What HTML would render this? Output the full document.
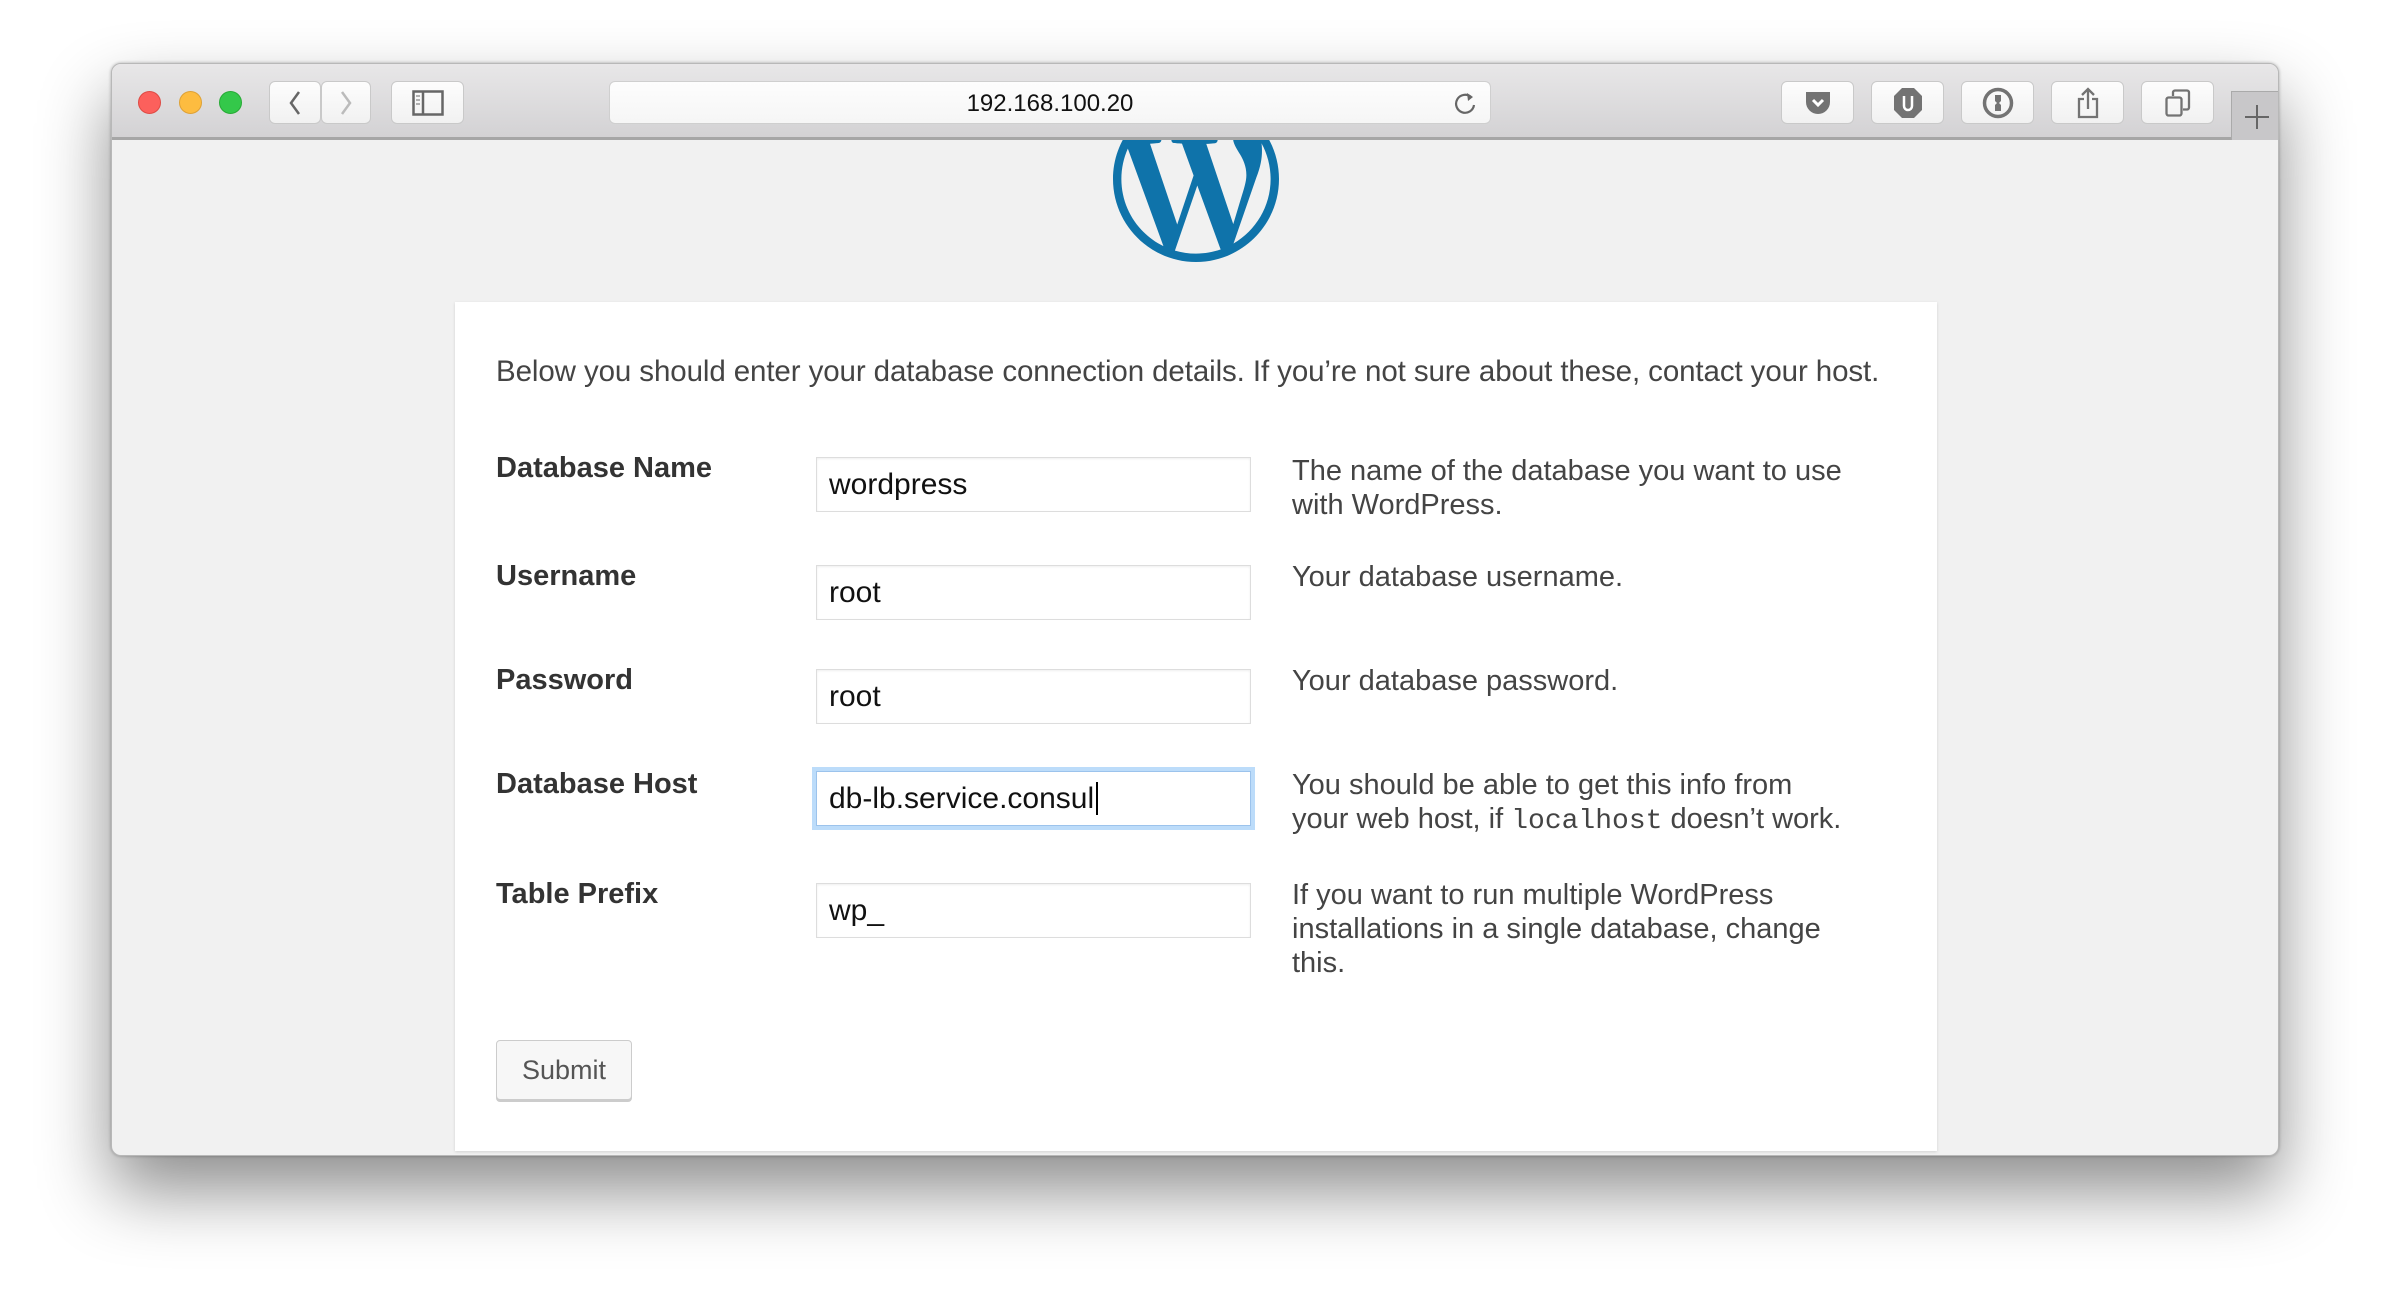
<!DOCTYPE html>
<html><head><meta charset="utf-8"><style>
*{box-sizing:border-box;margin:0;padding:0}
body{width:2390px;height:1316px;background:#fff;position:relative;overflow:hidden;font-family:"Liberation Sans",sans-serif}
.win{position:absolute;left:111px;top:63px;width:2168px;height:1093px;border-radius:10px;background:#f1f1f1;box-shadow:0 35px 70px rgba(0,0,0,.45),0 0 3px rgba(0,0,0,.3);overflow:hidden;border:1px solid #b8b8b8}
.tb{position:absolute;left:0;top:0;width:100%;height:76px;background:linear-gradient(#e8e7e8,#d3d2d4);border-bottom:3px solid #a6a6a6;z-index:5}
.dot{position:absolute;top:27px;width:23px;height:23px;border-radius:50%}
.btn{position:absolute;top:17px;height:43px;background:linear-gradient(#fdfdfd,#f1f1f1);border:1px solid #c9c9c9;border-radius:6px}
.url{position:absolute;left:497px;top:17px;width:882px;height:43px;background:linear-gradient(#fdfdfd,#f6f6f6);border:1px solid #cfcfcf;border-radius:6px;text-align:center;font-size:24px;line-height:43px;color:#111}
.btn svg{position:absolute;left:50%;top:50%;transform:translate(-50%,-50%)}
.card{position:absolute;left:343px;top:238px;width:1482px;height:849px;background:#fff;box-shadow:0 1px 3px rgba(0,0,0,.13)}
.p{position:absolute;left:41px;top:53px;font-size:29.5px;color:#444;white-space:nowrap;letter-spacing:-.1px}
.lb{position:absolute;left:41px;font-size:29px;font-weight:bold;color:#333}
.in{position:absolute;left:361px;width:435px;height:55px;border:1px solid #ddd;box-shadow:inset 0 1px 2px rgba(0,0,0,.07);font-size:30px;line-height:53px;padding-left:12px;color:#111;background:#fff}
.ds{position:absolute;left:837px;font-size:29px;line-height:34px;color:#444;white-space:nowrap}
code{font-family:"Liberation Mono",monospace;font-size:28px}
</style></head><body>
<div class="win">
<div class="tb">
<div class="dot" style="left:26px;background:#fc605c;border:1px solid #de4a44"></div>
<div class="dot" style="left:67px;background:#fdbc40;border:1px solid #dea135"></div>
<div class="dot" style="left:107px;background:#34c84a;border:1px solid #27aa35"></div>
<div class="btn" style="left:157px;width:52px"><svg width="16" height="28" viewBox="0 0 16 28"><path d="M12 3L4 14l8 11" fill="none" stroke="#666" stroke-width="2.5"/></svg></div>
<div class="btn" style="left:209px;width:50px"><svg width="16" height="28" viewBox="0 0 16 28"><path d="M4 3l8 11-8 11" fill="none" stroke="#bbb" stroke-width="2.5"/></svg></div>
<div class="btn" style="left:279px;width:73px"><svg width="32" height="26" viewBox="0 0 32 26"><rect x="1.5" y="1.5" width="29" height="23" fill="none" stroke="#666" stroke-width="2.5"/><path d="M11 2v22" stroke="#666" stroke-width="2.5"/><path d="M4 6h4M4 10h4M4 14h4" stroke="#999" stroke-width="1.5"/></svg></div>
<div class="url">192.168.100.20<svg style="position:absolute;right:12px;top:9px" width="24" height="26" viewBox="0 0 24 26"><path d="M17 6A9 9 0 1 0 20 14" fill="none" stroke="#666" stroke-width="2.2"/><path d="M13 2l6 4-5 4z" fill="#666"/></svg></div>
<div class="btn" style="left:1669px;width:73px"><svg width="26" height="26" viewBox="0 0 26 26"><path d="M1 2h24v10a12 12 0 0 1-24 0z" fill="#737373"/><path d="M8 10l5 5 5-5" fill="none" stroke="#fff" stroke-width="3"/></svg></div>
<div class="btn" style="left:1759px;width:73px"><svg width="28" height="30" viewBox="0 0 28 30"><path d="M8 0h12l8 8v14l-8 8H8l-8-8V8z" fill="#737373"/><path d="M10 8v10a4 4 0 0 0 8 0V8" fill="none" stroke="#fff" stroke-width="2.5"/></svg></div>
<div class="btn" style="left:1849px;width:73px"><svg width="32" height="32" viewBox="0 0 32 32"><circle cx="16" cy="16" r="13.5" fill="none" stroke="#737373" stroke-width="3.5"/><path d="M13 8h6v6l-2 2 2 2v6h-6v-6l2-2-2-2z" fill="#737373"/></svg></div>
<div class="btn" style="left:1939px;width:73px"><svg width="24" height="32" viewBox="0 0 24 32"><path d="M8 12H3v18h18V12h-5M12 22V2M6 8l6-6 6 6" fill="none" stroke="#737373" stroke-width="2.3"/></svg></div>
<div class="btn" style="left:2029px;width:73px"><svg width="26" height="28" viewBox="0 0 26 28"><rect x="1.5" y="8.5" width="15" height="18" rx="2" fill="none" stroke="#737373" stroke-width="2.3"/><path d="M8 7V3.5a2 2 0 0 1 2-2h12a2 2 0 0 1 2 2v15a2 2 0 0 1-2 2h-4" fill="none" stroke="#737373" stroke-width="2.3"/></svg></div>
<div style="position:absolute;left:2119px;top:27px;width:50px;height:49px;background:#c8c7c9;border-left:1px solid #aaa;border-top:1px solid #aaa"><svg style="position:absolute;left:12px;top:12px" width="26" height="26" viewBox="0 0 26 26"><path d="M13 1v24M1 13h24" stroke="#666" stroke-width="2"/></svg></div>
</div>
<svg style="position:absolute;left:1001px;top:32px;z-index:1" width="166" height="166" viewBox="0 0 24 24"><path fill="#0f73aa" d="M21.469 6.825c.84 1.537 1.318 3.3 1.318 5.175 0 3.979-2.156 7.456-5.363 9.325l3.295-9.527c.615-1.54.82-2.771.82-3.864 0-.405-.026-.78-.07-1.11m-7.981.105c.647-.03 1.232-.105 1.232-.105.582-.075.514-.93-.067-.899 0 0-1.755.135-2.88.135-1.064 0-2.850-.15-2.850-.15-.585-.03-.661.855-.075.885 0 0 .54.061 1.125.09l1.68 4.605-2.37 7.08L5.354 6.9c.649-.03 1.234-.1 1.234-.1.585-.075.516-.93-.065-.896 0 0-1.746.138-2.874.138-.2 0-.438-.008-.69-.015C4.911 3.15 8.235 1.215 12 1.215c2.809 0 5.365 1.072 7.286 2.833-.046-.003-.091-.009-.141-.009-1.06 0-1.812.923-1.812 1.914 0 .89.513 1.643 1.06 2.531.411.72.89 1.643.89 2.977 0 .915-.354 1.994-.821 3.479l-1.075 3.585-3.9-11.61.001.014zM12 22.784c-1.059 0-2.081-.153-3.048-.437l3.237-9.406 3.315 9.087c.024.053.05.101.078.149-1.12.393-2.325.609-3.582.609M1.211 12c0-1.564.336-3.05.935-4.39L7.29 21.709C3.694 19.960 1.212 16.271 1.211 12M12 0C5.385 0 0 5.385 0 12s5.385 12 12 12 12-5.385 12-12S18.615 0 12 0"/></svg>
<div class="card">
<div class="p">Below you should enter your database connection details. If you’re not sure about these, contact your host.</div>
<div class="lb" style="top:150px">Database Name</div>
<div class="in" style="top:155px">wordpress</div>
<div class="ds" style="top:152px">The name of the database you want to use<br>with WordPress.</div>
<div class="lb" style="top:258px">Username</div>
<div class="in" style="top:263px">root</div>
<div class="ds" style="top:258px">Your database username.</div>
<div class="lb" style="top:362px">Password</div>
<div class="in" style="top:367px">root</div>
<div class="ds" style="top:362px">Your database password.</div>
<div class="lb" style="top:466px">Database Host</div>
<div class="in" style="top:469px;box-shadow:0 0 0 4px #bcdcfa;border-color:#9cc3ec">db-lb.service.consul<span style="border-left:2px solid #000;margin-left:2px"></span></div>
<div class="ds" style="top:466px">You should be able to get this info from<br>your web host, if <code>localhost</code> doesn’t work.</div>
<div class="lb" style="top:576px">Table Prefix</div>
<div class="in" style="top:581px">wp_</div>
<div class="ds" style="top:576px">If you want to run multiple WordPress<br>installations in a single database, change<br>this.</div>
<div style="position:absolute;left:41px;top:738px;width:136px;height:60px;background:#f7f7f7;border:1px solid #ccc;border-radius:4px;box-shadow:0 2px 0 #ccc;font-size:27px;line-height:58px;text-align:center;color:#555">Submit</div>
</div>
</div>
</body></html>
